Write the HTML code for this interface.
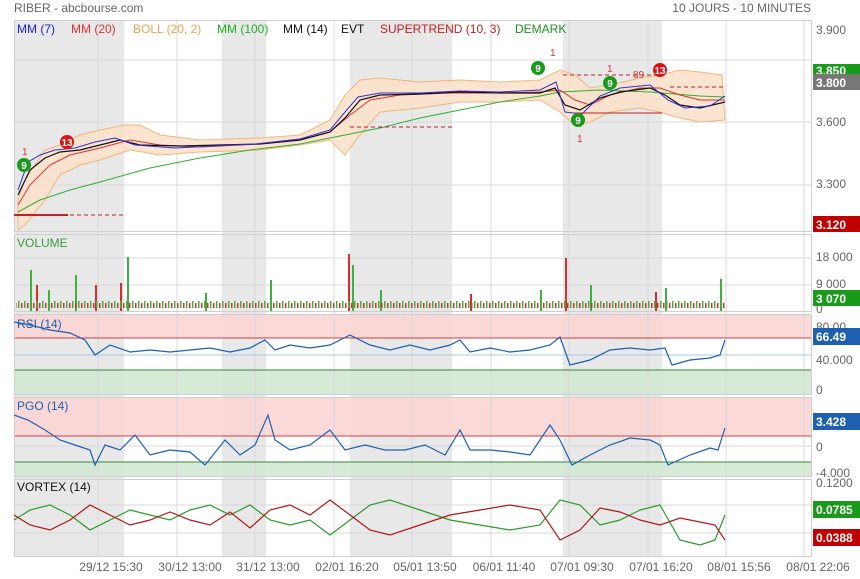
<!DOCTYPE html>
<html><head><meta charset="utf-8"><style>
body{margin:0;background:#fff;width:860px;height:579px;overflow:hidden;font-family:"Liberation Sans",sans-serif;}
svg{position:absolute;left:0;top:0}
text{font-family:"Liberation Sans",sans-serif}
</style></head><body>
<svg width="860" height="579" viewBox="0 0 860 579">
<defs>
<clipPath id="cp"><rect x="14" y="20" width="797" height="537"/></clipPath>
</defs>
<!-- grey bands -->
<g fill="#e8e8e8">
<rect x="14" y="20" width="110" height="537"/>
<rect x="222" y="20" width="44" height="537"/>
<rect x="350" y="20" width="102" height="537"/>
<rect x="563" y="20" width="99" height="537"/>
</g>
<!-- RSI/PGO zones -->
<rect x="14" y="314" width="797" height="24" fill="#fbd5d5" opacity="0.9"/>
<rect x="14" y="370" width="797" height="25" fill="#d3e8d3" opacity="0.9"/>
<rect x="14" y="397" width="797" height="39" fill="#fbd5d5" opacity="0.9"/>
<rect x="14" y="462" width="797" height="15" fill="#d3e8d3" opacity="0.9"/>
<!-- grid -->
<g stroke="#d8d8d8" stroke-width="1">
<line x1="98" y1="20" x2="98" y2="557"/><line x1="177" y1="20" x2="177" y2="557"/>
<line x1="255" y1="20" x2="255" y2="557"/><line x1="334" y1="20" x2="334" y2="557"/>
<line x1="412" y1="20" x2="412" y2="557"/><line x1="491" y1="20" x2="491" y2="557"/>
<line x1="569" y1="20" x2="569" y2="557"/><line x1="648" y1="20" x2="648" y2="557"/>
<line x1="726" y1="20" x2="726" y2="557"/><line x1="804" y1="20" x2="804" y2="557"/>
<line x1="14" y1="60" x2="811" y2="60"/><line x1="14" y1="122" x2="811" y2="122"/><line x1="14" y1="185" x2="811" y2="185"/>
<line x1="14" y1="258" x2="811" y2="258"/><line x1="14" y1="285" x2="811" y2="285"/>
<line x1="14" y1="355" x2="811" y2="355" stroke="#a8c8e8"/>
<line x1="14" y1="446" x2="811" y2="446"/>
<line x1="14" y1="505" x2="811" y2="505"/><line x1="14" y1="533" x2="811" y2="533"/>
</g>
<line x1="14" y1="338" x2="811" y2="338" stroke="#d04040"/>
<line x1="14" y1="370" x2="811" y2="370" stroke="#3a8a3a"/>
<line x1="14" y1="436" x2="811" y2="436" stroke="#d04040"/>
<line x1="14" y1="462" x2="811" y2="462" stroke="#3a8a3a"/>
<!-- panel borders -->
<g fill="none" stroke="#cfcfcf">
<rect x="14.5" y="20.5" width="797" height="211"/>
<rect x="14.5" y="234.5" width="797" height="77"/>
<rect x="14.5" y="314.5" width="797" height="80"/>
<rect x="14.5" y="397.5" width="797" height="79"/>
<rect x="14.5" y="479.5" width="797" height="77"/>
</g>
<!-- Bollinger -->
<path d="M18,200 L25,180 L45,150 L60,145 L80,135 L100,130 L125,125 L140,125 L160,135 L200,140 L260,138 L300,135 L330,120 L345,95 L360,80 L380,78 L420,82 L460,80 L500,82 L540,80 L560,70 L575,75 L590,88 L610,85 L640,78 L660,75 L680,70 L700,72 L722,75 L725,120 L700,122 L680,118 L660,112 L640,108 L610,112 L590,122 L575,125 L560,112 L540,100 L500,102 L460,102 L420,108 L380,112 L360,135 L345,155 L330,140 L300,145 L260,150 L200,152 L160,155 L130,150 L100,160 L80,165 L60,175 L45,200 L25,225 L18,230 Z" fill="#fbe3cc" stroke="#f0b070" stroke-width="1" opacity="0.9"/>
<!-- MM100 -->
<polyline points="18,212 40,200 70,190 100,182 150,168 200,158 250,150 300,144 340,136 380,128 420,118 460,110 500,102 540,96 560,92 600,90 650,92 700,96 725,97" fill="none" stroke="#30b030" stroke-width="1"/>
<!-- MM20 -->
<polyline points="18,205 30,185 50,165 70,155 100,148 130,140 160,145 200,147 260,144 300,140 330,132 350,115 370,100 400,95 450,93 500,93 540,92 560,90 575,100 590,105 610,95 640,88 660,88 680,95 700,100 725,100" fill="none" stroke="#e03030" stroke-width="1"/>
<!-- MM14 / MM7 -->
<polyline points="18,195 30,170 45,158 60,152 80,150 100,145 120,140 140,145 180,146 220,145 260,144 300,140 330,132 345,118 360,100 380,95 420,94 460,92 500,93 540,93 555,88 565,105 580,110 600,98 620,92 650,88 665,95 680,105 700,108 725,102" fill="none" stroke="#111" stroke-width="1.2"/>
<polyline points="18,190 28,162 40,155 55,150 75,148 95,142 115,138 135,145 175,148 215,146 255,144 300,139 330,130 345,112 358,97 380,93 420,93 460,91 500,92 540,90 556,82 565,112 582,114 600,96 620,88 650,85 668,100 685,108 710,106 725,96" fill="none" stroke="#3030d0" stroke-width="1"/>
<!-- supertrend -->
<g stroke="#c02020" fill="none">
<line x1="14" y1="215" x2="124" y2="215" stroke-dasharray="4,3"/>
<line x1="14" y1="215" x2="68" y2="215" stroke-width="2"/>
<line x1="350" y1="127" x2="452" y2="127" stroke-dasharray="4,3"/>
<line x1="563" y1="75" x2="662" y2="75" stroke-dasharray="4,3"/>
<line x1="575" y1="113" x2="662" y2="113"/>
<line x1="670" y1="87" x2="725" y2="87" stroke-dasharray="4,3"/>
</g>
<!-- demark markers -->
<g font-size="10" font-weight="bold" text-anchor="middle">
<circle cx="24" cy="165" r="7" fill="#1a9a1a"/><text x="24" y="169" fill="#fff">9</text>
<circle cx="67" cy="142" r="7" fill="#e01010"/><text x="67" y="146" fill="#fff">13</text>
<circle cx="538" cy="68" r="7" fill="#1a9a1a"/><text x="538" y="72" fill="#fff">9</text>
<circle cx="610" cy="83" r="7" fill="#1a9a1a"/><text x="610" y="87" fill="#fff">9</text>
<circle cx="578" cy="120" r="7" fill="#1a9a1a"/><text x="578" y="124" fill="#fff">9</text>
<circle cx="660" cy="70" r="7" fill="#e01010"/><text x="660" y="74" fill="#fff">13</text>
</g>
<g font-size="10" fill="#e03030">
<text x="22" y="155">1</text><text x="550" y="56">1</text><text x="577" y="142">1</text><text x="607" y="72">1</text><text x="633" y="78">89</text>
</g>
<!-- RSI line -->
<polyline points="14,322 30,325 50,330 70,333 85,340 95,355 110,345 130,352 150,350 170,352 190,350 210,348 230,352 250,348 265,340 275,350 290,345 310,348 330,345 350,335 370,345 390,350 410,345 430,350 450,345 460,340 470,352 490,348 510,352 530,350 550,345 560,337 570,365 590,360 610,350 630,348 650,350 665,348 672,365 690,360 710,358 720,355 725,340" fill="none" stroke="#1e5fb0" stroke-width="1.2"/>
<!-- PGO line -->
<polyline points="14,415 28,420 45,430 60,440 75,445 90,450 95,465 105,445 120,450 135,435 150,455 170,450 190,452 205,465 225,440 240,455 255,445 268,415 275,440 290,450 310,445 330,430 345,450 365,445 385,450 405,450 425,445 445,455 460,430 470,450 490,450 510,452 530,455 550,425 560,440 572,465 590,455 610,445 630,438 650,440 660,445 668,465 690,455 710,448 718,450 725,428" fill="none" stroke="#1e5fb0" stroke-width="1.2"/>
<!-- Vortex -->
<polyline points="14,520 30,510 50,505 70,515 90,530 110,520 130,510 150,515 170,520 190,510 210,505 230,515 250,505 270,520 290,525 310,520 330,535 350,520 370,505 390,500 420,510 450,520 480,525 510,530 540,525 560,500 580,505 600,525 620,520 640,510 660,505 680,540 700,545 715,540 725,515" fill="none" stroke="#2a9a2a" stroke-width="1.2"/>
<polyline points="14,515 30,525 50,530 70,520 90,505 110,515 130,525 150,520 170,512 190,520 210,525 230,512 250,528 270,510 290,505 310,515 330,500 350,515 370,530 390,535 420,525 450,515 480,510 510,505 540,510 560,540 580,530 600,508 620,512 640,520 660,525 680,518 700,522 715,525 725,540" fill="none" stroke="#b01818" stroke-width="1.2"/>
<!-- Volume bars -->
<g fill="#40b040">
<rect x="30" y="270" width="2" height="41"/><rect x="48" y="290" width="2" height="21"/><rect x="75" y="275" width="2" height="36"/><rect x="127" y="257" width="2" height="54"/><rect x="205" y="293" width="2" height="18"/><rect x="270" y="280" width="2" height="31"/><rect x="352" y="265" width="2" height="46"/><rect x="380" y="290" width="2" height="21"/><rect x="540" y="290" width="2" height="21"/><rect x="590" y="285" width="2" height="26"/><rect x="665" y="288" width="2" height="23"/><rect x="720" y="279" width="2" height="32"/>
</g>
<g fill="#d03030">
<rect x="36" y="285" width="2" height="26"/><rect x="95" y="285" width="2" height="26"/><rect x="120" y="283" width="2" height="28"/><rect x="348" y="254" width="2" height="57"/><rect x="565" y="258" width="2" height="53"/><rect x="470" y="294" width="2" height="17"/><rect x="655" y="292" width="2" height="19"/>
</g>
<rect x="16" y="300" width="710" height="11" fill="url(#vp)"/>
<defs><pattern id="vp" width="6" height="11" patternUnits="userSpaceOnUse"><rect x="0" y="4" width="1.5" height="7" fill="#40b040"/><rect x="3" y="6" width="1.5" height="5" fill="#d03030"/></pattern></defs>
<!-- titles -->
<text x="14" y="12" font-size="12" fill="#666">RIBER - abcbourse.com</text>
<text x="811" y="12" font-size="12" fill="#666" text-anchor="end">10 JOURS - 10 MINUTES</text>
<g font-size="12">
<text x="17" y="33" fill="#2020d0">MM (7)</text>
<text x="71" y="33" fill="#e03030">MM (20)</text>
<text x="133" y="33" fill="#f0a050">BOLL (20, 2)</text>
<text x="217" y="33" fill="#20b020">MM (100)</text>
<text x="283" y="33" fill="#111">MM (14)</text>
<text x="341" y="33" fill="#111">EVT</text>
<text x="380" y="33" fill="#c02020">SUPERTREND (10, 3)</text>
<text x="515" y="33" fill="#209020">DEMARK</text>
<text x="17" y="247" fill="#3a9a3a">VOLUME</text>
<text x="17" y="328" fill="#1e5fb0">RSI (14)</text>
<text x="17" y="410" fill="#1e5fb0">PGO (14)</text>
<text x="17" y="491" fill="#111">VORTEX (14)</text>
</g>
<!-- right axis -->
<g font-size="12" fill="#666">
<text x="816" y="34">3.900</text><text x="816" y="126">3.600</text><text x="816" y="188">3.300</text>
<text x="816" y="261">18 000</text><text x="816" y="288">9 000</text><text x="816" y="313">0</text>
<text x="816" y="331">80.00</text><text x="816" y="364">40.000</text><text x="816" y="394">0</text>
<text x="816" y="451">0</text><text x="816" y="477">-4.000</text><text x="816" y="487">0.1200</text>
</g>
<g font-size="12" font-weight="bold" fill="#fff">
<rect x="813" y="64" width="47" height="12" fill="#1a9a1a"/><text x="816" y="75">3.850</text>
<rect x="813" y="74" width="47" height="16" fill="#777"/><text x="816" y="87">3.800</text>
<rect x="813" y="216" width="47" height="16" fill="#c00000"/><text x="816" y="229">3.120</text>
<rect x="813" y="290" width="47" height="16" fill="#1a9a1a"/><text x="816" y="303">3 070</text>
<rect x="813" y="328" width="47" height="17" fill="#1e5fb0"/><text x="816" y="341">66.49</text>
<rect x="813" y="413" width="47" height="17" fill="#1e5fb0"/><text x="816" y="426">3.428</text>
<rect x="813" y="501" width="47" height="17" fill="#1a9a1a"/><text x="816" y="514">0.0785</text>
<rect x="813" y="529" width="47" height="17" fill="#c00000"/><text x="816" y="542">0.0388</text>
</g>
<!-- bottom axis -->
<g font-size="12" fill="#666" text-anchor="middle">
<text x="111" y="571">29/12 15:30</text><text x="190" y="571">30/12 13:00</text><text x="268" y="571">31/12 13:00</text>
<text x="347" y="571">02/01 16:20</text><text x="425" y="571">05/01 13:50</text><text x="504" y="571">06/01 11:40</text>
<text x="582" y="571">07/01 09:30</text><text x="661" y="571">07/01 16:20</text><text x="739" y="571">08/01 15:56</text>
<text x="818" y="571">08/01 22:06</text>
</g>
</svg>
</body></html>
